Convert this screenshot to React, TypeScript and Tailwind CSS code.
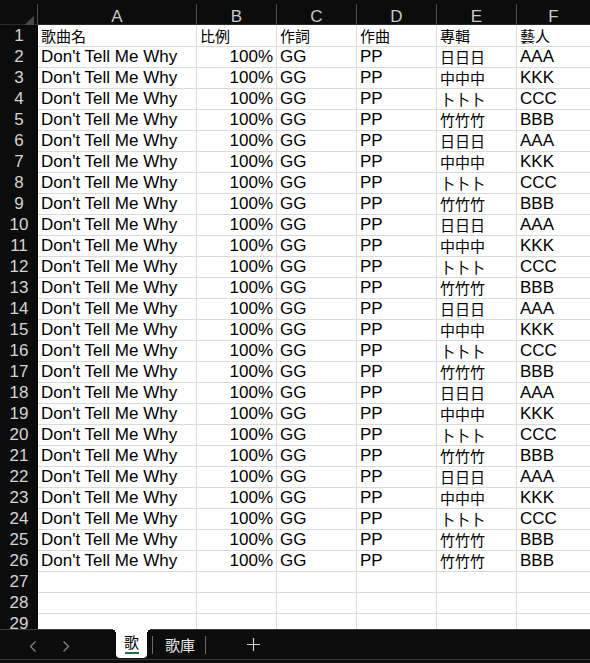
import React from 'react'

const cols = ['A', 'B', 'C', 'D', 'E', 'F']

const albums = [
  ['日日日', 'AAA'],
  ['中中中', 'KKK'],
  ['卜卜卜', 'CCC'],
  ['竹竹竹', 'BBB'],
]

const rows = Array.from({ length: 25 }, (_, i) => {
  const [album, artist] = i === 24 ? albums[3] : albums[i % 4]
  return { title: "Don't Tell Me Why", ratio: '100%', lyric: 'GG', music: 'PP', album, artist }
})

const grid = 'grid grid-cols-[38px_159px_80px_80px_80px_80px_1fr]'
const latin = 'font-["Liberation_Sans","Noto_Sans_CJK_TC",sans-serif] text-[17px] leading-[20px] pt-[1px]'
const cjk = 'font-["Noto_Sans_CJK_TC",sans-serif] text-[15px] leading-[20px] pt-[1px]'
const cell = 'border-r border-[#dadada] px-[3px] overflow-hidden whitespace-nowrap text-black'

const RowNum = ({ n }: { n: number }) => (
  <div className='bg-[#0c0c0c] border-b border-[#2e2e2e] flex items-center justify-center text-[#d4d4d4] font-["Liberation_Sans",sans-serif] text-[17px] leading-[20px] pt-[1px]'>
    {n}
  </div>
)

const Chevron = ({ dir }: { dir: 'left' | 'right' }) => (
  <svg width='8' height='11' viewBox='0 0 8 11' fill='none' stroke='#8a8a8a' strokeWidth='1.2'>
    {dir === 'left' ? <path d='M6.5 0.5 L1.5 5.5 L6.5 10.5' /> : <path d='M1.5 0.5 L6.5 5.5 L1.5 10.5' />}
  </svg>
)

export default function App() {
  return (
    <div className="w-[590px] h-[663px] bg-[#0c0c0c] overflow-hidden flex flex-col">
      <div className="h-[629px] overflow-hidden bg-white">
        {/* column headers */}
        <div className={`${grid} h-[25px] bg-[#0c0c0c] border-b border-[#2a2a2a] pt-1`}>
          <div className="border-r border-[#4d4d4d] flex items-end justify-end pr-[3px] pb-[2px]">
            <svg width="15" height="14" viewBox="0 0 15 14">
              <polygon points="15,0 15,14 0,14" fill="#4a4a4a" />
            </svg>
          </div>
          {cols.map((c) => (
            <div key={c} className='border-r border-[#4d4d4d] last:border-r-0 flex items-center justify-center pb-[2px] text-[#c8c8c8] font-["Liberation_Sans",sans-serif] text-[17px]'>
              {c}
            </div>
          ))}
        </div>

        {/* header row */}
        <div className={`${grid} h-[21px]`}>
          <RowNum n={1} />
          <div className={`${cell} ${cjk} border-b`}>歌曲名</div>
          <div className={`${cell} ${cjk} border-b`}>比例</div>
          <div className={`${cell} ${cjk} border-b`}>作詞</div>
          <div className={`${cell} ${cjk} border-b`}>作曲</div>
          <div className={`${cell} ${cjk} border-b`}>專輯</div>
          <div className={`${cell} ${cjk} border-b border-r-0`}>藝人</div>
        </div>

        {rows.map((r, i) => (
          <div key={i} className={`${grid} h-[21px]`}>
            <RowNum n={i + 2} />
            <div className={`${cell} ${latin} border-b`}>{r.title}</div>
            <div className={`${cell} ${latin} border-b text-right`}>{r.ratio}</div>
            <div className={`${cell} ${latin} border-b`}>{r.lyric}</div>
            <div className={`${cell} ${latin} border-b`}>{r.music}</div>
            <div className={`${cell} ${cjk} border-b`}>{r.album}</div>
            <div className={`${cell} ${latin} border-b border-r-0`}>{r.artist}</div>
          </div>
        ))}

        {[27, 28, 29].map((n) => (
          <div key={n} className={`${grid} h-[21px]`}>
            <RowNum n={n} />
            {cols.map((c) => (
              <div key={c} className="border-r border-b border-[#dadada] last:border-r-0" />
            ))}
          </div>
        ))}
      </div>

      {/* sheet tabs */}
      <div className="h-[34px] border-t border-[#3c3c3c] bg-[#0c0c0c]">
        <div className="h-[30px] border-b border-[#3a3a3a] flex items-start">
          <div className="flex items-center h-[30px] pl-[29px] gap-[25px] pt-[2px]">
            <Chevron dir="left" />
            <Chevron dir="right" />
          </div>
          <div className="relative ml-[46px] -mt-px h-[29px] w-[31px] bg-white rounded-b-[4px] flex flex-col items-center pt-[5px]">
            <span className="absolute -left-[5px] top-0 w-[5px] h-[5px] bg-[radial-gradient(circle_at_0_100%,transparent_5px,white_5px)]" />
            <span className="absolute -right-[5px] top-0 w-[5px] h-[5px] bg-[radial-gradient(circle_at_100%_100%,transparent_5px,white_5px)]" />
            <span className='font-["Noto_Sans_CJK_TC",sans-serif] text-[15px] leading-[15px] text-black'>歌</span>
            <span className="mt-[3px] h-[2px] w-[14px] bg-[#1e7145]" />
          </div>
          <div className="ml-[5px] w-px h-[18px] bg-[#6a6a6a] self-center" />
          <span className='ml-[12px] self-center font-["Noto_Sans_CJK_TC",sans-serif] text-[15px] leading-[15px] text-[#e8e8e8]'>歌庫</span>
          <div className="ml-[10px] w-px h-[18px] bg-[#6a6a6a] self-center" />
          <svg className="ml-[41px] self-center" width="13" height="13" viewBox="0 0 13 13" stroke="#d0d0d0" strokeWidth="1.2">
            <path d="M6.5 0 V13 M0 6.5 H13" />
          </svg>
        </div>
      </div>
    </div>
  )
}
